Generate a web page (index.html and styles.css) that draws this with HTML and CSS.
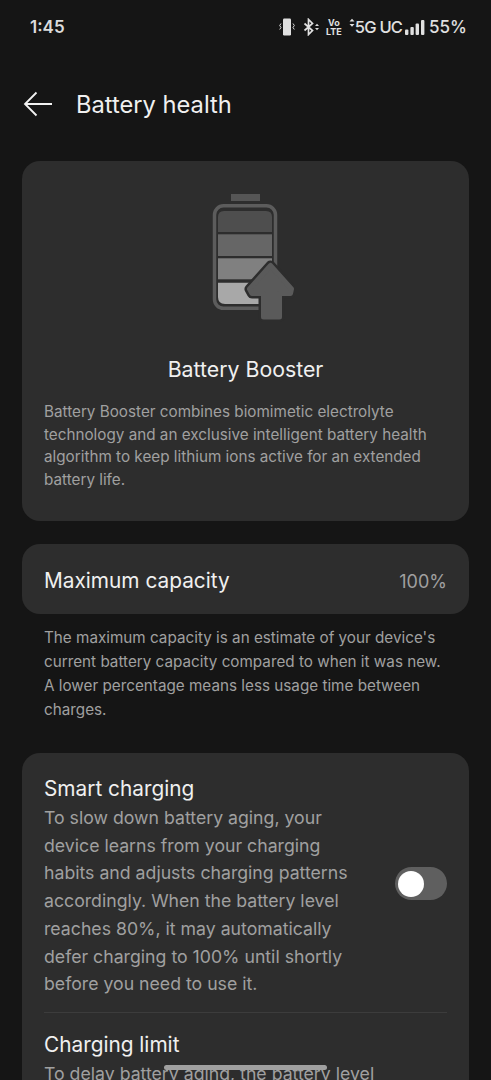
FILE: index.html
```html
<!DOCTYPE html>
<html lang="en">
<head>
    <meta charset="UTF-8">
    <meta name="viewport" content="width=device-width, initial-scale=1.0">
    <title>Battery health</title>
    <link rel="stylesheet" href="styles.css">
</head>
<body>
    <div class="screen">
        <div class="status-bar">
            <span class="time">1:45</span>
            <div class="status-icons">
                <svg class="icon-vibrate" width="16" height="18" viewBox="0 0 16 18">
                    <rect x="4" y="0.500" width="8" height="17" rx="1.200" fill="#e0e0e0"/>
                    <path d="M2 5.500 L0.700 7.500 L2 9.500 L0.700 11.500 M14 5.500 L15.300 7.500 L14 9.500 L15.300 11.500" fill="none" stroke="#d8d8d8" stroke-width="1"/>
                </svg>
                <svg class="icon-bt" width="17" height="18" viewBox="0 0 17 18">
                    <path d="M1.500 5.500 L9.500 12.500 L5.500 16.500 V1.500 L9.500 5.500 L1.500 12.500" fill="none" stroke="#e0e0e0" stroke-width="1.700"/>
                    <path d="M12 8 L14 5.800 L16 8 Z M12 10 L14 12.200 L16 10 Z" fill="#d8d8d8"/>
                </svg>
                <span class="volte"><span>Vo</span><span>LTE</span></span>
                <svg class="icon-arrows" width="6" height="10" viewBox="0 0 6 10">
                    <path d="M0.500 3.600 L3 0.800 L5.500 3.600 Z M0.500 6 L3 8.800 L5.500 6 Z" fill="#e0e0e0"/>
                </svg>
                <span class="network">5G UC</span>
                <svg class="icon-signal" width="20" height="17" viewBox="0 0 20 17">
                    <rect x="0" y="10.500" width="3.400" height="5.500" rx="1" fill="#e0e0e0"/>
                    <rect x="5.400" y="8" width="3.400" height="8" rx="1" fill="#e0e0e0"/>
                    <rect x="10.600" y="4.500" width="3.400" height="11.500" rx="1" fill="#e0e0e0"/>
                    <rect x="16" y="1" width="3.400" height="15" rx="1" fill="#e0e0e0"/>
                </svg>
                <span class="level">55%</span>
            </div>
        </div>

        <header class="app-bar">
            <svg class="back" width="30" height="26" viewBox="0 0 30 26">
                <path d="M29 13 H2 M13.500 1.500 L2 13 L13.500 24.500" fill="none" stroke="#f2f2f2" stroke-width="1.800"/>
            </svg>
            <h1>Battery health</h1>
        </header>

        <section class="card booster">
            <svg class="battery" width="84" height="130" viewBox="0 0 84 130">
                <rect x="20" y="1" width="29" height="7" fill="#555"/>
                <rect x="3.500" y="12.800" width="61" height="102.500" rx="9" fill="none" stroke="#5c5c5c" stroke-width="3.500"/>
                <path d="M7 24 Q7 18 13 18 H55 Q61 18 61 24 V39 H7 Z" fill="#4e4e4e"/>
                <rect x="7" y="41.300" width="54" height="21.700" fill="#666"/>
                <rect x="7" y="65.300" width="54" height="21" fill="#808080"/>
                <path d="M7 89.700 H61 V111 H14 Q7 111 7 104 Z" fill="#a8a8a8"/>
                <path d="M59.500 72.500 L38.500 96 L41 100.500 H52.500 V124 H68.500 V100.500 H79.500 L80.500 96 Z" fill="#2d2d2d" stroke="#2d2d2d" stroke-width="10" stroke-linejoin="round"/>
                <path d="M59.500 72.500 L38.500 96 L41 100.500 H52.500 V124 H68.500 V100.500 H79.500 L80.500 96 Z" fill="#5a5a5a" stroke="#5a5a5a" stroke-width="5" stroke-linejoin="round"/>
            </svg>
            <h2>Battery Booster</h2>
            <p class="muted">Battery Booster combines biomimetic electrolyte<br>technology and an exclusive intelligent battery health<br>algorithm to keep lithium ions active for an extended<br>battery life.</p>
        </section>

        <section class="card capacity">
            <span class="row-title">Maximum capacity</span>
            <span class="capacity-value">100%</span>
        </section>

        <p class="note">The maximum capacity is an estimate of your device's<br>current battery capacity compared to when it was new.<br>A lower percentage means less usage time between<br>charges.</p>

        <section class="card settings">
            <div class="setting">
                <div class="setting-text">
                    <span class="row-title">Smart charging</span>
                    <p class="setting-desc">To slow down battery aging, your<br>device learns from your charging<br>habits and adjusts charging patterns<br>accordingly. When the battery level<br>reaches 80%, it may automatically<br>defer charging to 100% until shortly<br>before you need to use it.</p>
                </div>
                <div class="toggle"><span class="knob"></span></div>
            </div>
            <div class="setting limit">
                <div class="setting-text">
                    <span class="row-title">Charging limit</span>
                    <p class="setting-desc">To delay battery aging, the battery level</p>
                </div>
            </div>
        </section>

        <div class="home-bar"></div>
    </div>
</body>
</html>
```

FILE: styles.css
```css
:root {
    --bg: #151515;
    --card: #2d2d2d;
    --text: #f0f0f0;
    --muted: #a0a0a0;
}

* {
    box-sizing: border-box;
    margin: 0;
    padding: 0;
}

body {
    background: var(--bg);
    font-family: Inter, "Noto Sans", sans-serif;
    color: var(--text);
}

.screen {
    position: relative;
    height: 1080px;
    overflow: hidden;
    padding: 0 22px;
}

.status-bar {
    display: flex;
    justify-content: space-between;
    align-items: center;
    height: 54px;
    margin: 0 -22px;
    padding: 0 24px 0 30px;
}

.time {
    font-size: 17px;
    font-weight: 600;
    color: #dcdcdc;
}

.status-icons {
    display: flex;
    align-items: center;
    color: #e0e0e0;
}

.icon-vibrate { margin-right: 8px; }
.icon-bt { margin-right: 6px; }

.volte {
    display: flex;
    flex-direction: column;
    align-items: center;
    font-size: 9px;
    line-height: 9px;
    font-weight: 700;
    margin-right: 7px;
}

.icon-arrows {
    margin: 0 0 8px 0;
}

.network {
    font-size: 16.500px;
    font-weight: 500;
    letter-spacing: -0.800px;
    word-spacing: 0;
    margin-right: 3px;
}

.icon-signal { margin-right: 4px; }

.level {
    font-size: 17px;
    font-weight: 500;
}

.app-bar {
    display: flex;
    align-items: center;
    height: 54px;
    margin-top: 23px;
    padding-left: 1px;
}

.back { margin-right: 23px; }

.app-bar h1 {
    font-size: 23.700px;
    font-weight: 400;
    color: var(--text);
}

.card {
    background: var(--card);
    border-radius: 18px;
}

.booster {
    display: flex;
    flex-direction: column;
    align-items: center;
    height: 360px;
    margin-top: 30px;
    padding: 32px 22px 0;
}

.battery {
    margin-left: 15px;
}

.booster h2 {
    font-size: 21.300px;
    font-weight: 400;
    margin-top: 31px;
    line-height: 30px;
}

.muted {
    width: 100%;
    font-size: 15.250px;
    line-height: 22.500px;
    color: var(--muted);
    margin-top: 17px;
}

.capacity {
    display: flex;
    justify-content: space-between;
    align-items: center;
    height: 70px;
    margin-top: 23px;
    padding: 4px 22px 0;
}

.row-title {
    font-size: 20.800px;
    font-weight: 400;
    line-height: 28px;
}

.capacity-value {
    font-size: 18px;
    color: var(--muted);
}

.note {
    font-size: 15.250px;
    line-height: 24px;
    color: var(--muted);
    padding: 12px 22px 0;
}

.settings {
    margin-top: 31px;
    padding: 22px 22px 0;
}

.setting {
    display: flex;
    align-items: center;
    justify-content: space-between;
    padding-bottom: 14px;
}

.setting-desc {
    font-size: 17.700px;
    line-height: 27.700px;
    margin-top: 1px;
    color: var(--muted);
}

.limit {
    border-top: 1px solid #3c3c3c;
    padding-top: 18px;
}

.toggle {
    position: relative;
    width: 52px;
    height: 33px;
    border-radius: 17px;
    background: #5f5f5f;
    margin-bottom: 5px;
}

.knob {
    position: absolute;
    left: 3px;
    top: 3.500px;
    width: 26px;
    height: 26px;
    border-radius: 50%;
    background: #fff;
}

.home-bar {
    position: absolute;
    left: 164px;
    top: 1065px;
    width: 163px;
    height: 5px;
    border-radius: 3px;
    background: #a0a0a0;
}
```
